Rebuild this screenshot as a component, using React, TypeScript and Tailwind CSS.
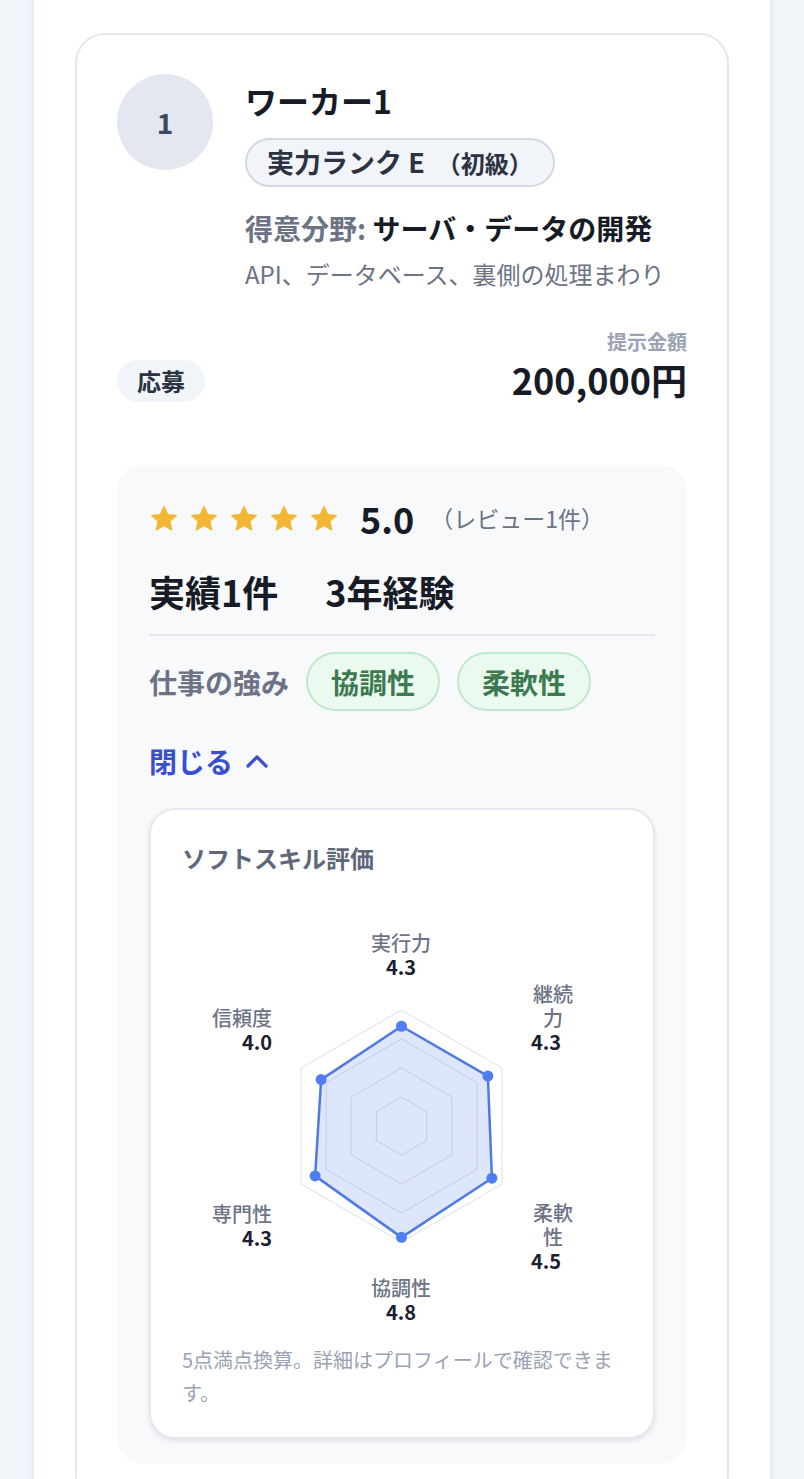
import React from "react";

const FONT = { fontFamily: '"Noto Sans CJK JP", "Noto Sans", sans-serif' };

function Star() {
  return (
    <svg width="30" height="29" viewBox="0 0 24 23">
      <path
        d="M12 0.8l3.3 7 7.6 0.9-5.6 5.2 1.5 7.6L12 17.7l-6.8 3.8 1.5-7.6L1.1 8.7l7.6-0.9z"
        fill="#f2b632"
      />
    </svg>
  );
}

const CX = 219.5;
const CY = 230;
const R = 116;
const scores = [4.3, 4.3, 4.5, 4.8, 4.3, 4.0];

function pt(i: number, r: number) {
  const a = (-90 + i * 60) * (Math.PI / 180);
  return [CX + r * Math.cos(a), CY + r * Math.sin(a)];
}

function ring(r: number) {
  return [0, 1, 2, 3, 4, 5].map((i) => pt(i, r).join(",")).join(" ");
}

function Radar() {
  const data = scores.map((s, i) => pt(i, (s / 5) * R));
  return (
    <div className="relative h-[430px] w-full">
      <svg className="absolute left-0 top-0" width="439" height="430" viewBox="0 0 439 430">
        {[1, 0.75, 0.5, 0.25].map((k) => (
          <polygon key={k} points={ring(R * k)} fill="none" stroke="#e3e6ee" strokeWidth="1.2" />
        ))}
        <polygon
          points={data.map((p) => p.join(",")).join(" ")}
          fill="rgba(90,130,240,0.2)"
          stroke="#4f7ae6"
          strokeWidth="2.5"
          strokeLinejoin="round"
        />
        {data.map((p, i) => (
          <circle key={i} cx={p[0]} cy={p[1]} r="5.5" fill="#4f7ef2" />
        ))}
      </svg>

      <div className="absolute left-[169px] top-[35px] w-[100px] text-center text-[20px] leading-[24px]">
        <div className="font-medium text-[#6b7385]">実行力</div>
        <div className="font-bold text-[#1a2030]">4.3</div>
      </div>

      <div className="absolute left-[349px] top-[86px] text-[20px] leading-[24px]">
        <div className="w-[44px] text-center font-medium text-[#6b7385]">継続<br />力</div>
        <div className="font-bold text-[#1a2030]">4.3</div>
      </div>

      <div className="absolute left-[20px] top-[110px] w-[70px] text-right text-[20px] leading-[24px]">
        <div className="font-medium text-[#6b7385]">信頼度</div>
        <div className="font-bold text-[#1a2030]">4.0</div>
      </div>

      <div className="absolute left-[20px] top-[306px] w-[70px] text-right text-[20px] leading-[24px]">
        <div className="font-medium text-[#6b7385]">専門性</div>
        <div className="font-bold text-[#1a2030]">4.3</div>
      </div>

      <div className="absolute left-[349px] top-[305px] text-[20px] leading-[24px]">
        <div className="w-[44px] text-center font-medium text-[#6b7385]">柔軟<br />性</div>
        <div className="font-bold text-[#1a2030]">4.5</div>
      </div>

      <div className="absolute left-[169px] top-[380px] w-[100px] text-center text-[20px] leading-[24px]">
        <div className="font-medium text-[#6b7385]">協調性</div>
        <div className="font-bold text-[#1a2030]">4.8</div>
      </div>
    </div>
  );
}

export default function App() {
  return (
    <div className="min-h-[1479px] bg-[#f1f4f9]" style={FONT}>
      <div className="mx-[34px] min-h-[1479px] bg-white px-[41px] pt-[33px] shadow-[0_0_6px_rgba(150,160,190,0.25)]">
        <div className="rounded-[30px] border-2 border-[#e4e7ec] px-[40px] pb-[40px] pt-[39px]">
          {/* header */}
          <div className="flex gap-[32px]">
            <div className="flex h-[96px] w-[96px] shrink-0 items-center justify-center rounded-full bg-[#e3e7ef] text-[28px] font-bold text-[#3d485c]">
              1
            </div>
            <div className="flex flex-col items-start pt-[6px]">
              <div className="text-[32px] font-bold leading-[40px] text-[#161b26]">ワーカー1</div>
              <div className="mt-[18px] flex h-[49px] items-center rounded-full border-2 border-[#d3d8e1] bg-[#f1f4f9] px-[20px]">
                <span className="text-[27px] font-bold text-[#2b3342]">実力ランク E</span>
                <span className="ml-[12px] text-[24px] font-semibold text-[#2b3342]">（初級）</span>
              </div>
              <div className="mt-[21px] text-[28px] font-bold leading-[40px]">
                <span className="text-[#6b7385]">得意分野: </span>
                <span className="text-[#161b26]">サーバ・データの開発</span>
              </div>
              <div className="mt-[8px] text-[24px] leading-[36px] text-[#6b7385]">
                API、データベース、裏側の処理まわり
              </div>
            </div>
          </div>

          {/* apply / price */}
          <div className="mt-[36px] flex items-end justify-between">
            <div className="flex h-[42px] items-center rounded-full bg-[#f1f4f9] px-[20px] text-[24px] font-bold text-[#2b3342]">
              応募
            </div>
            <div className="flex flex-col items-end">
              <div className="text-[20px] font-bold leading-[28px] text-[#9aa3b5]">提示金額</div>
              <div className="text-[36px] font-bold leading-[46px] text-[#161b26]">200,000円</div>
            </div>
          </div>

          {/* stats panel */}
          <div className="mt-[63px] rounded-[26px] bg-[#f8f9fb] px-[32px] pb-[25px] pt-[33px]">
            <div className="flex h-[40px] items-center">
              <div className="flex gap-[10px]">
                <Star />
                <Star />
                <Star />
                <Star />
                <Star />
              </div>
              <span className="ml-[21px] text-[36px] font-bold text-[#161b26]">5.0</span>
              <span className="ml-[16px] text-[23px] text-[#6b7385]">（レビュー1件）</span>
            </div>

            <div className="mt-[31px] flex gap-[47px] text-[36px] font-bold leading-[44px] text-[#161b26]">
              <span>実績1件</span>
              <span>3年経験</span>
            </div>

            <div className="mt-[21px] h-[2px] bg-[#e3e6eb]" />

            <div className="mt-[16px] flex items-center gap-[17px]">
              <span className="text-[28px] font-bold text-[#6b7385]">仕事の強み</span>
              <span className="flex h-[59px] items-center rounded-full border-2 border-[#bfe8cb] bg-[#eafaef] px-[23px] text-[28px] font-bold text-[#3e7a50]">
                協調性
              </span>
              <span className="flex h-[59px] items-center rounded-full border-2 border-[#bfe8cb] bg-[#eafaef] px-[23px] text-[28px] font-bold text-[#3e7a50]">
                柔軟性
              </span>
            </div>

            <div className="mt-[32px] flex items-center gap-[13px] text-[28px] font-bold leading-[36px] text-[#3a4fcf]">
              <span>閉じる</span>
              <svg width="22" height="14" viewBox="0 0 22 14">
                <path d="M2 12L11 3l9 9" fill="none" stroke="#3a4fcf" strokeWidth="3.2" strokeLinecap="round" strokeLinejoin="round" />
              </svg>
            </div>

            {/* soft skills card */}
            <div className="mt-[29px] rounded-[26px] border-2 border-[#e6e8ee] bg-white px-[31px] pb-[28px] pt-[32px] shadow-[0_2px_4px_rgba(150,160,180,0.25)]">
              <div className="text-[24px] font-bold leading-[32px] text-[#5f6879]">ソフトスキル評価</div>
              <div className="mt-[22px]">
                <Radar />
              </div>
              <p className="mt-[17px] text-[20px] leading-[33px] text-[#9aa3b5]">
                5点満点換算。詳細はプロフィールで確認できます。
              </p>
            </div>
          </div>
        </div>
      </div>
    </div>
  );
}
